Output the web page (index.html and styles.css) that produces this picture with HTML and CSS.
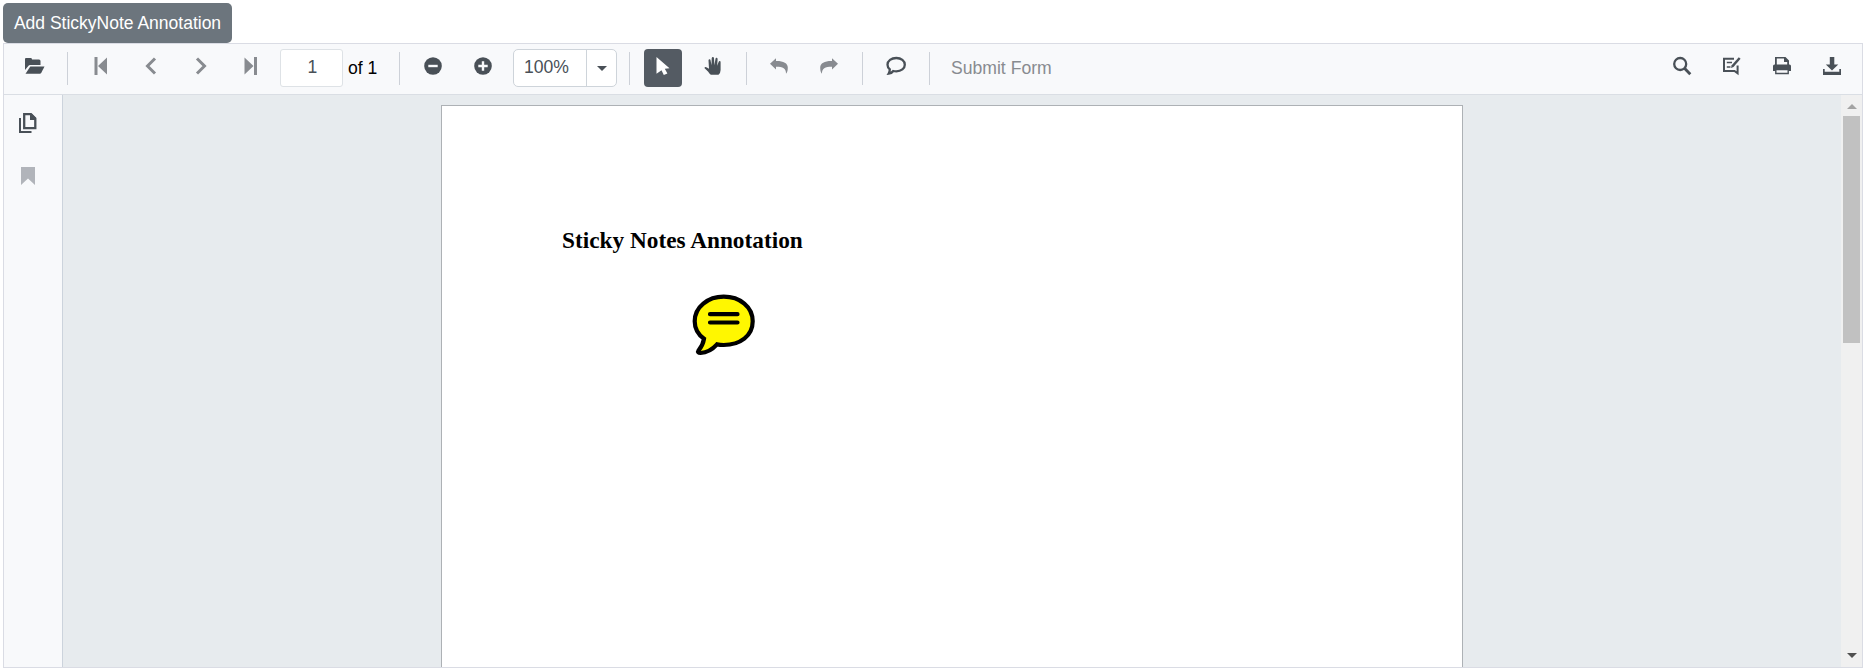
FILE: index.html
```html
<!DOCTYPE html>
<html lang="en">
<head>
<meta charset="utf-8">
<title>PDF Viewer</title>
<link rel="stylesheet" href="styles.css">
</head>
<body>
<button class="add-btn"><span>Add StickyNote Annotation</span></button>
<div class="viewer">
  <div class="toolbar">
    <button class="tool open"><svg viewBox="0 0 20 20"><path d="M1 14V3Q1 2 2 2H7Q8 2 8 3.5H15Q16.500 3.500 16.500 5V9H6Q5 9 4.500 9.800Z"/><path d="M6.300 10.500H20.500L17.200 17Q16.700 17.800 15.800 17.800H1.500Z"/></svg></button>
    <i class="sep"></i>
    <button class="tool dim"><svg viewBox="0 0 20 20"><path d="M3.500 1H6.500V19H3.500ZM16 1.500V18.500L7 10Z"/></svg></button>
    <button class="tool dim"><svg viewBox="0 0 20 20"><path class="chev" d="M14 2.500L6.500 10L14 17.500"/></svg></button>
    <button class="tool dim"><svg viewBox="0 0 20 20"><path class="chev" d="M6 2.500L13.500 10L6 17.500"/></svg></button>
    <button class="tool dim"><svg viewBox="0 0 20 20"><path d="M13 1H16V19H13ZM3.500 1.500V18.500L12.500 10Z"/></svg></button>
    <div class="page-box"><span>1</span></div>
    <span class="total">of 1</span>
    <i class="sep"></i>
    <button class="tool"><svg viewBox="0 0 20 20"><circle cx="10" cy="10" r="8.800"/><path class="mark" d="M5.300 10H14.700"/></svg></button>
    <button class="tool"><svg viewBox="0 0 20 20"><circle cx="10" cy="10" r="8.800"/><path class="mark" d="M5.300 10H14.700M10 5.200V14.800"/></svg></button>
    <div class="zoom"><span class="zoom-value">100%</span><span class="zoom-arrow"></span></div>
    <i class="sep"></i>
    <button class="tool active"><svg viewBox="0 0 20 20"><path d="M3.500 1L16.500 12.200L11.800 12.700L14.400 17.500L10.800 19L8.500 14.300L3.500 17.800Z"/></svg></button>
    <button class="tool"><svg viewBox="0 0 20 20"><path d="M7.800 18.800Q6.500 17.800 5 15.500L1.600 12.200Q1.200 11.200 2.300 11Q3.500 10.900 6 12.800L5.500 4.600Q5.600 3.200 6.700 3.300Q7.400 3.400 7.600 4.500L8.500 9.200L8.700 2.300Q8.900 1 9.900 1Q10.900 1 11 2.300L11.400 9.200L12.500 2.800Q12.800 1.600 13.700 1.800Q14.700 2 14.600 3.200L14.200 9.700L15.700 5.700Q16.200 4.700 17 5Q17.700 5.300 17.600 6.300V14Q17.400 17.800 15.500 18.800Z"/></svg></button>
    <i class="sep"></i>
    <button class="tool dim"><svg viewBox="0 0 20 20"><path d="M1 7.800L7 2.300V5C14 4.800 18.800 7 18.800 11.500C18.800 14 18.500 16 17 17.800C17.200 12.500 14 10.800 7 10.800V13.500Z"/></svg></button>
    <button class="tool dim"><svg viewBox="0 0 20 20"><path d="M19 7.800L13 2.300V5C6 4.800 1.200 7 1.200 11.500C1.200 14 1.500 16 3 17.800C2.800 12.500 6 10.800 13 10.800V13.500Z"/></svg></button>
    <i class="sep"></i>
    <button class="tool"><svg viewBox="0 0 20 20"><path class="line thick" d="M10.300 2C15.200 2 18.800 4.900 18.800 8.700C18.800 12.500 15.200 15.300 10.300 15.300Q8.700 15.300 7.300 15Q5.500 17.600 2.700 17.700Q3.700 16.200 3.800 13.300Q1.500 11.400 1.500 8.700C1.500 4.900 5.300 2 10.300 2Z"/></svg></button>
    <i class="sep"></i>
    <span class="submit">Submit Form</span>
    <div class="actions">
      <button class="tool"><svg viewBox="0 0 20 20"><circle class="line thick" cx="8.200" cy="8" r="6"/><path class="line thicker" d="M12.500 12.300L18.300 18.200"/></svg></button>
      <button class="tool"><svg viewBox="0 0 20 20"><path class="line" d="M12 2.700H2V15H12.500L15.600 17.300V9.500"/><path class="line thin" d="M4.800 6.500H10M4.800 11H8.500"/><path d="M16.800 1.200L18.600 2.800L11.500 11L9 12L9.700 9.200Z"/></svg></button>
      <button class="tool"><svg viewBox="0 0 20 20"><path d="M3 1H13.500L17 4.500V9H15.200V6H12V2.600H4.800V9H3Z"/><path d="M2.500 8.500H17.500Q19 8.500 19 10V15H1V10Q1 8.500 2.500 8.500Z"/><path class="paper" d="M3.800 13.600H16.200V17.500H3.800Z"/></svg></button>
      <button class="tool"><svg viewBox="0 0 20 20"><path d="M7.800 1H12.300V8.500H16.300L10 14.600L3.800 8.500H7.800ZM1 13H2.700V15.800H17.300V13H19V19H1Z"/></svg></button>
    </div>
  </div>
  <div class="main">
    <div class="sidebar">
      <svg class="pages" viewBox="0 0 20 22"><path class="line thick" d="M6.200 2.200H13L17.300 6.500V16.200H6.200Z"/><path d="M12 2V8H18V6L14 2Z"/><path class="line" d="M2 6V20H13.500"/></svg>
      <svg class="bookmark" viewBox="0 0 14 18"><path d="M0 0H14V18L7 11.500L0 18Z"/></svg>
    </div>
    <div class="canvas">
      <div class="page">
        <h1><span>Sticky Notes Annotation</span></h1>
        <svg class="note" viewBox="0 0 64 62"><path d="M31.700 2.700C48 2.700 60.700 13 60.700 27.300C60.700 42 48 51 31.700 51Q28 51 25 50.400C20 56 15 58.700 8.500 59C6.500 59 5.500 58 6.500 56.500Q11 51 12 44.800C6 40.500 2.700 35 2.700 27.300C2.700 13 16 2.700 31.700 2.700Z"/><path d="M18 20.200H45.500M18 28.500H45.500"/></svg>
      </div>
    </div>
    <div class="scrollbar"><i class="up"></i><i class="thumb"></i><i class="down"></i></div>
  </div>
</div>
</body>
</html>
```
FILE: styles.css
```css
* { box-sizing: border-box; }
body {
  margin: 0;
  padding: 3px 2px 0 3px;
  height: 668px;
  overflow: hidden;
  background: #fff;
  font-family: "Liberation Sans", Arial, sans-serif;
  font-size: 17.6px;
}
button { border: 0; padding: 0; font: inherit; }
.add-btn {
  display: block;
  width: 229px;
  height: 40px;
  padding: 1px 0 0;
  border-radius: 5px;
  background: #6c757d;
  color: #fff;
  font-size: 17.5px;
  white-space: nowrap;
}
.viewer {
  height: 625px;
  border: 1px solid #dadce4;
  display: flex;
  flex-direction: column;
}
.toolbar {
  height: 51px;
  flex: none;
  display: flex;
  align-items: flex-start;
  padding: 5px 7px 0 11px;
  background: #f8f9fb;
  border-bottom: 1px solid #dadee4;
}
.tool {
  width: 38px;
  height: 38px;
  flex: none;
  margin-right: 12px;
  display: flex;
  align-items: center;
  justify-content: center;
  padding-bottom: 4px;
  border-radius: 4px;
  background: none;
  color: #495057;
}
.tool svg { width: 20px; height: 20px; overflow: visible; }
svg { fill: currentColor; }
.dim { color: #888b90; }
.active { background: #545b63; color: #fff; }
.chev { fill: none; stroke: currentColor; stroke-width: 3; }
.mark { fill: none; stroke: #f8f9fb; stroke-width: 2.4; }
.line { fill: none; stroke: currentColor; stroke-width: 2; }
.thick { stroke-width: 2.3; }
.thicker { stroke-width: 2.9; }
.thin { stroke-width: 1.3; }
.paper { fill: #f8f9fb; stroke: currentColor; stroke-width: 1.4; }
.sep {
  width: 1px;
  height: 33px;
  flex: none;
  margin: 3px 13.5px 0 2px;
  background: #cdd1d8;
}
.page-box {
  width: 63px;
  height: 38px;
  margin-left: -1.5px;
  border: 1px solid #dee2e6;
  border-radius: 3px;
  background: #fff;
  color: #495057;
  text-align: center;
  line-height: 34px;
}
.page-box span { margin-left: 2px; }
.total { width: 49px; margin-left: 5px; line-height: 38px; color: #000; white-space: nowrap; }
.zoom {
  width: 104px;
  height: 38px;
  margin: 0 10px 0 -0.5px;
  display: flex;
  border: 1px solid #ced4da;
  border-radius: 5px;
  background: #fff;
  color: #495057;
}
.zoom-value { width: 73px; padding-left: 10px; line-height: 34px; border-right: 1px solid #ced4da; }
.zoom-arrow { margin: 16px 0 0 10px; width: 0; height: 0; border: 5px solid transparent; border-top-color: #495057; border-bottom: 0; }
.submit { margin-left: 8px; line-height: 38px; color: #888b90; white-space: nowrap; }
.actions { margin-left: auto; display: flex; }
.actions .tool:last-child { margin-right: 4px; }
.main { flex: 1; display: flex; min-height: 0; }
.sidebar {
  width: 59px;
  flex: none;
  display: flex;
  flex-direction: column;
  padding: 17px 0 0 14px;
  background: #f8f9fb;
  border-right: 1px solid #ccd3dc;
  color: #495057;
}
.pages { width: 20px; height: 22px; }
.bookmark { width: 14px; height: 18px; margin: 33px 0 0 3px; color: #b1b4ba; }
.canvas { flex: 1; padding: 10px 0 0 378px; background: #e7ebee; overflow: hidden; }
.page {
  width: 1022px;
  height: 1200px;
  padding: 118px 0 0 120px;
  border: 1px solid #adb1b5;
  background: #fff;
}
h1 {
  margin: 0;
  font: bold 23.3px/32px "Liberation Serif", "Times New Roman", serif;
  color: #000;
  white-space: nowrap;
}
.note { display: block; width: 64px; height: 62px; margin: 38px 0 0 130px; fill: #fff700; stroke: #000; stroke-width: 4.2; stroke-linecap: round; }
.scrollbar {
  width: 21px;
  flex: none;
  display: flex;
  flex-direction: column;
  align-items: center;
  padding: 9px 0 9px;
  background: #f0f0f0;
}
.up, .down { width: 0; height: 0; border: 5px solid transparent; }
.up { border-bottom-color: #a3a3a3; border-top: 0; }
.down { border-top-color: #505050; border-bottom: 0; margin-top: auto; }
.thumb { width: 17px; height: 227px; margin-top: 7px; background: #c1c1c1; }
```
